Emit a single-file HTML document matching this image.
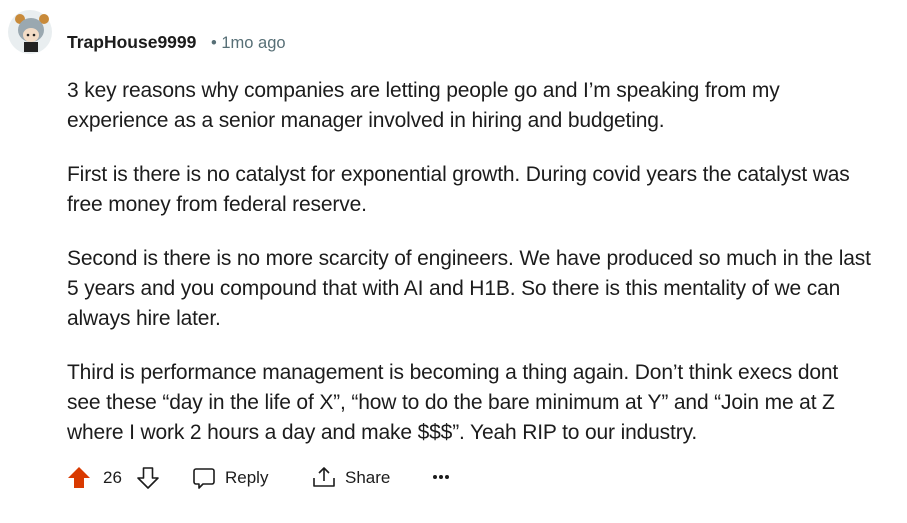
<!DOCTYPE html>
<html><head><meta charset="utf-8"><style>
body{margin:0;background:#fff;width:907px;height:523px;overflow:hidden;font-family:"Liberation Sans",sans-serif;color:#1a1a1b;position:relative}
.a{position:absolute}
.t{position:absolute;left:67px;font-size:21px;letter-spacing:-0.15px;white-space:nowrap;color:#1c1c1c}
.b{font-size:17px;color:#1c1c1c}
</style></head><body>
<svg class="a" style="left:8px;top:10px" width="44" height="44" viewBox="0 0 44 44">
<circle cx="22" cy="22" r="22" fill="#e9eef0"/>
<circle cx="12" cy="9" r="5" fill="#c88a3a"/><circle cx="36" cy="9" r="5" fill="#c88a3a"/>
<ellipse cx="23" cy="20" rx="13" ry="12" fill="#9aa8b0"/>
<ellipse cx="23" cy="25" rx="8" ry="7" fill="#f3dcc6"/>
<rect x="16" y="32" width="14" height="10" fill="#222"/>
<circle cx="20" cy="25" r="1.3" fill="#222"/><circle cx="26" cy="25" r="1.3" fill="#222"/>
</svg>
<div class="a" style="left:67px;top:32px;font-size:17.5px;font-weight:bold;color:#1c1c1c">TrapHouse9999</div>
<div class="a" style="left:211px;top:34px;font-size:16.5px;color:#576f76">• 1mo ago</div>
<div class="t" style="top:79px">3 key reasons why companies are letting people go and I’m speaking from my</div>
<div class="t" style="top:109px">experience as a senior manager involved in hiring and budgeting.</div>
<div class="t" style="top:163px">First is there is no catalyst for exponential growth. During covid years the catalyst was</div>
<div class="t" style="top:193px">free money from federal reserve.</div>
<div class="t" style="top:247px">Second is there is no more scarcity of engineers. We have produced so much in the last</div>
<div class="t" style="top:277px">5 years and you compound that with AI and H1B. So there is this mentality of we can</div>
<div class="t" style="top:307px">always hire later.</div>
<div class="t" style="top:361px">Third is performance management is becoming a thing again. Don’t think execs dont</div>
<div class="t" style="top:391px">see these “day in the life of X”, “how to do the bare minimum at Y” and “Join me at Z</div>
<div class="t" style="top:421px">where I work 2 hours a day and make $$$”. Yeah RIP to our industry.</div>
<svg class="a" style="left:67px;top:466px" width="24" height="24" viewBox="0 0 24 24"><path d="M12 1L1 12h6v10h10V12h6z" fill="#d93a00"/></svg>
<div class="a b" style="left:103px;top:468px">26</div>
<svg class="a" style="left:136px;top:466px" width="24" height="24" viewBox="0 0 24 24"><path d="M12 22L2 12h5.5V2h9v10H22z" fill="none" stroke="#1c1c1c" stroke-width="1.6" stroke-linejoin="round"/></svg>
<svg class="a" style="left:192px;top:466px" width="24" height="24" viewBox="0 0 24 24"><path d="M4 3h16a2 2 0 0 1 2 2v11a2 2 0 0 1-2 2H11l-4 4v-4H4a2 2 0 0 1-2-2V5a2 2 0 0 1 2-2z" fill="none" stroke="#1c1c1c" stroke-width="1.6" stroke-linejoin="round"/></svg>
<div class="a b" style="left:225px;top:468px">Reply</div>
<svg class="a" style="left:312px;top:465px" width="24" height="24" viewBox="0 0 24 24"><path d="M12 16V3M7 8l5-5 5 5M2 13v8h20v-8" fill="none" stroke="#1c1c1c" stroke-width="1.6" stroke-linejoin="round"/></svg>
<div class="a b" style="left:345px;top:468px">Share</div>
<svg class="a" style="left:432px;top:474px" width="18" height="6"><circle cx="3" cy="3" r="2" fill="#1c1c1c"/><circle cx="9" cy="3" r="2" fill="#1c1c1c"/><circle cx="15" cy="3" r="2" fill="#1c1c1c"/></svg>
</body></html>
